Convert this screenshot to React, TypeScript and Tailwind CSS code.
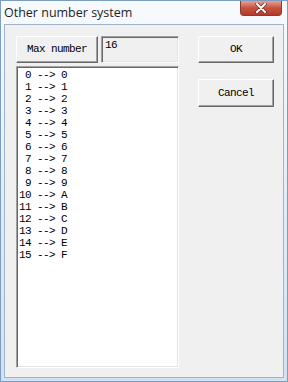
import React from 'react';

const mono = { fontFamily: '"Liberation Mono", "DejaVu Sans Mono", monospace' };

const rows = ['0', '1', '2', '3', '4', '5', '6', '7', '8', '9', 'A', 'B', 'C', 'D', 'E', 'F'];

function RaisedButton({ label, className = '' }: { label: string; className?: string }) {
  return (
    <button
      className={`flex items-center justify-center bg-[#f0f0f0] border border-t-white border-l-white border-r-[#696969] border-b-[#696969] shadow-[inset_-1px_-1px_0_#a0a0a0] text-[11px] tracking-[-0.6px] text-black ${className}`}
      style={mono}
    >
      {label}
    </button>
  );
}

function CloseButton() {
  return (
    <div className="w-[42px] h-[15px] rounded-b-[4px] bg-gradient-to-b from-[#e8a093] via-[#c7513f] to-[#b53a28] border border-t-0 border-[#8b3a2e] flex items-center justify-center">
      <svg width="12" height="10" viewBox="0 0 12 10">
        <path d="M2 1 L10 9 M10 1 L2 9" stroke="#5a2a22" strokeWidth="3.2" strokeLinecap="round" />
        <path d="M2 1 L10 9 M10 1 L2 9" stroke="#ffffff" strokeWidth="2" strokeLinecap="round" />
      </svg>
    </div>
  );
}

export default function App() {
  return (
    <div className="w-[288px] h-[382px] flex flex-col bg-gradient-to-b from-[#f7fafd] via-[#e4edf7] to-[#d3e1f1] border border-[#7d9cc2]">
      <div className="h-[23px] flex items-start justify-between pl-[3px] pr-[5px]">
        <span className="mt-[3px] text-[12.5px] text-[#1e1e1e]" style={{ fontFamily: '"Open Sans", "Noto Sans", sans-serif' }}>
          Other number system
        </span>
        <CloseButton />
      </div>
      <div className="mx-[3px] mb-[3px] flex-1 bg-[#f0f0f0] border border-[#9fb3cb] flex pl-[11px] pt-[11px]">
        <div className="w-[163px] flex flex-col">
          <div className="flex gap-[3px] h-[27px]">
            <RaisedButton label="Max number" className="w-[82px] h-[27px]" />
            <div
              className="flex-1 h-[27px] bg-[#f0f0f0] border border-t-[#a0a0a0] border-l-[#a0a0a0] border-r-white border-b-white shadow-[inset_1px_1px_0_#696969,inset_-1px_-1px_0_#e3e3e3] px-[3px] pt-[1px] text-[11px] tracking-[-0.6px] text-black leading-[14px]"
              style={mono}
            >
              16
            </div>
          </div>
          <div
            className="mt-[3px] h-[302px] bg-white border border-t-[#a0a0a0] border-l-[#a0a0a0] border-r-white border-b-white shadow-[inset_1px_1px_0_#696969,inset_-1px_-1px_0_#e3e3e3] pt-[2px] pl-[2px] text-[11px] tracking-[-0.6px] leading-[12px] text-black whitespace-pre"
            style={mono}
          >
            {rows.map((v, i) => (
              <div key={i}>{`${String(i).padStart(2, ' ')} --> ${v}`}</div>
            ))}
          </div>
        </div>
        <div className="ml-[19px] w-[76px] flex flex-col">
          <RaisedButton label="OK" className="w-[76px] h-[27px]" />
          <RaisedButton label="Cancel" className="mt-[16px] w-[76px] h-[28px]" />
        </div>
      </div>
    </div>
  );
}
